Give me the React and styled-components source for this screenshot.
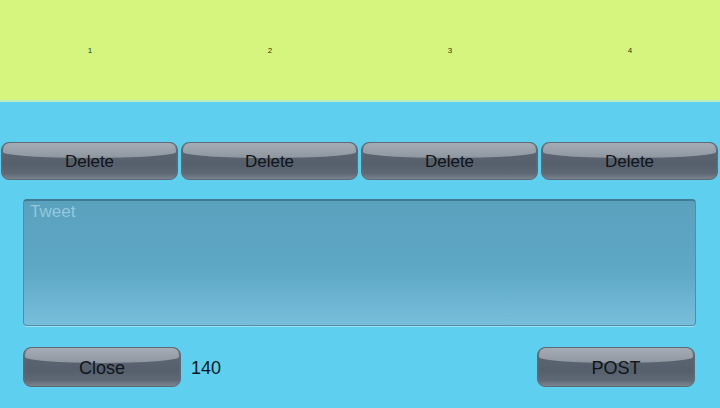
import React from "react";
import styled, { createGlobalStyle } from "styled-components";

const GlobalStyle = createGlobalStyle`
  html, body {
    margin: 0;
    padding: 0;
    width: 720px;
    height: 408px;
    overflow: hidden;
    background-color: #5fcff0;
    font-family: "Liberation Sans", Arial, sans-serif;
  }
`;

const Page = styled.div`
  display: flex;
  flex-direction: column;
  width: 720px;
  height: 408px;
  background-color: #5fcff0;
`;

const SlotBar = styled.div`
  display: grid;
  grid-template-columns: repeat(4, 1fr);
  height: 100px;
  background-color: #d6f57f;
  border-bottom: 2px solid #b9ecc0;
`;

const SlotLabel = styled.div`
  display: flex;
  align-items: center;
  justify-content: center;
  font-size: 8px;
  color: #2a3a10;
  padding-top: 1px;
`;

const DeleteRow = styled.div`
  display: grid;
  grid-template-columns: repeat(4, 1fr);
  margin-top: 40px;
`;

const DeleteCell = styled.div`
  padding: 0 2px 0 1px;
`;

const GlossButton = styled.button`
  position: relative;
  display: flex;
  align-items: center;
  justify-content: center;
  width: ${(props) => props.width || "100%"};
  height: ${(props) => props.height || "38px"};
  padding: 2px 0 0;
  border: 1px solid #5d6a78;
  border-radius: 8px;
  font-family: "Liberation Sans", Arial, sans-serif;
  font-size: ${(props) => props.size || "17px"};
  color: #111418;
  overflow: hidden;
  background: linear-gradient(
    to bottom,
    #5e6875 0%,
    #56606d 60%,
    #5f6976 85%,
    #7a838e 100%
  );
  box-shadow: inset 0 1px 1px rgba(255, 255, 255, 0.25);

  &::before {
    content: "";
    position: absolute;
    left: 1px;
    right: 1px;
    top: 0;
    height: 15px;
    border-radius: 7px 7px 50% 50% / 7px 7px 6px 6px;
    background: linear-gradient(to bottom, #a5acb5 0%, #8e96a0 100%);
  }

  span {
    position: relative;
  }
`;

const TweetBox = styled.textarea`
  display: block;
  box-sizing: border-box;
  height: 127px;
  margin: 19px 24px 0 23px;
  padding: 1px 6px;
  resize: none;
  border: 1px solid #4f8ea6;
  border-top: 2px solid #3f7c93;
  border-radius: 4px;
  background: linear-gradient(to bottom, #5aa1be 0%, #5ea8c5 55%, #77bedb 100%);
  box-shadow: 0 1px 0 #9fe0f4;
  font-family: "Liberation Sans", Arial, sans-serif;
  font-size: 17px;
  color: #ffffff;
  outline: none;

  &::placeholder {
    color: #92c8dc;
  }
`;

const BottomRow = styled.div`
  display: flex;
  align-items: center;
  margin-top: 21px;
  padding: 0 25px 0 23px;
`;

const Counter = styled.div`
  margin-left: 10px;
  padding-top: 2px;
  font-size: 18px;
  color: #0d1a22;
  flex: 1;
`;

export default function App() {
  const slots = ["1", "2", "3", "4"];
  return (
    <>
      <GlobalStyle />
      <Page>
        <SlotBar>
          {slots.map((s) => (
            <SlotLabel key={s}>{s}</SlotLabel>
          ))}
        </SlotBar>
        <DeleteRow>
          {slots.map((s) => (
            <DeleteCell key={s}>
              <GlossButton>
                <span>Delete</span>
              </GlossButton>
            </DeleteCell>
          ))}
        </DeleteRow>
        <TweetBox placeholder="Tweet" />
        <BottomRow>
          <GlossButton width="158px" height="40px" size="18px">
            <span>Close</span>
          </GlossButton>
          <Counter>140</Counter>
          <GlossButton width="158px" height="40px" size="18px">
            <span>POST</span>
          </GlossButton>
        </BottomRow>
      </Page>
    </>
  );
}
